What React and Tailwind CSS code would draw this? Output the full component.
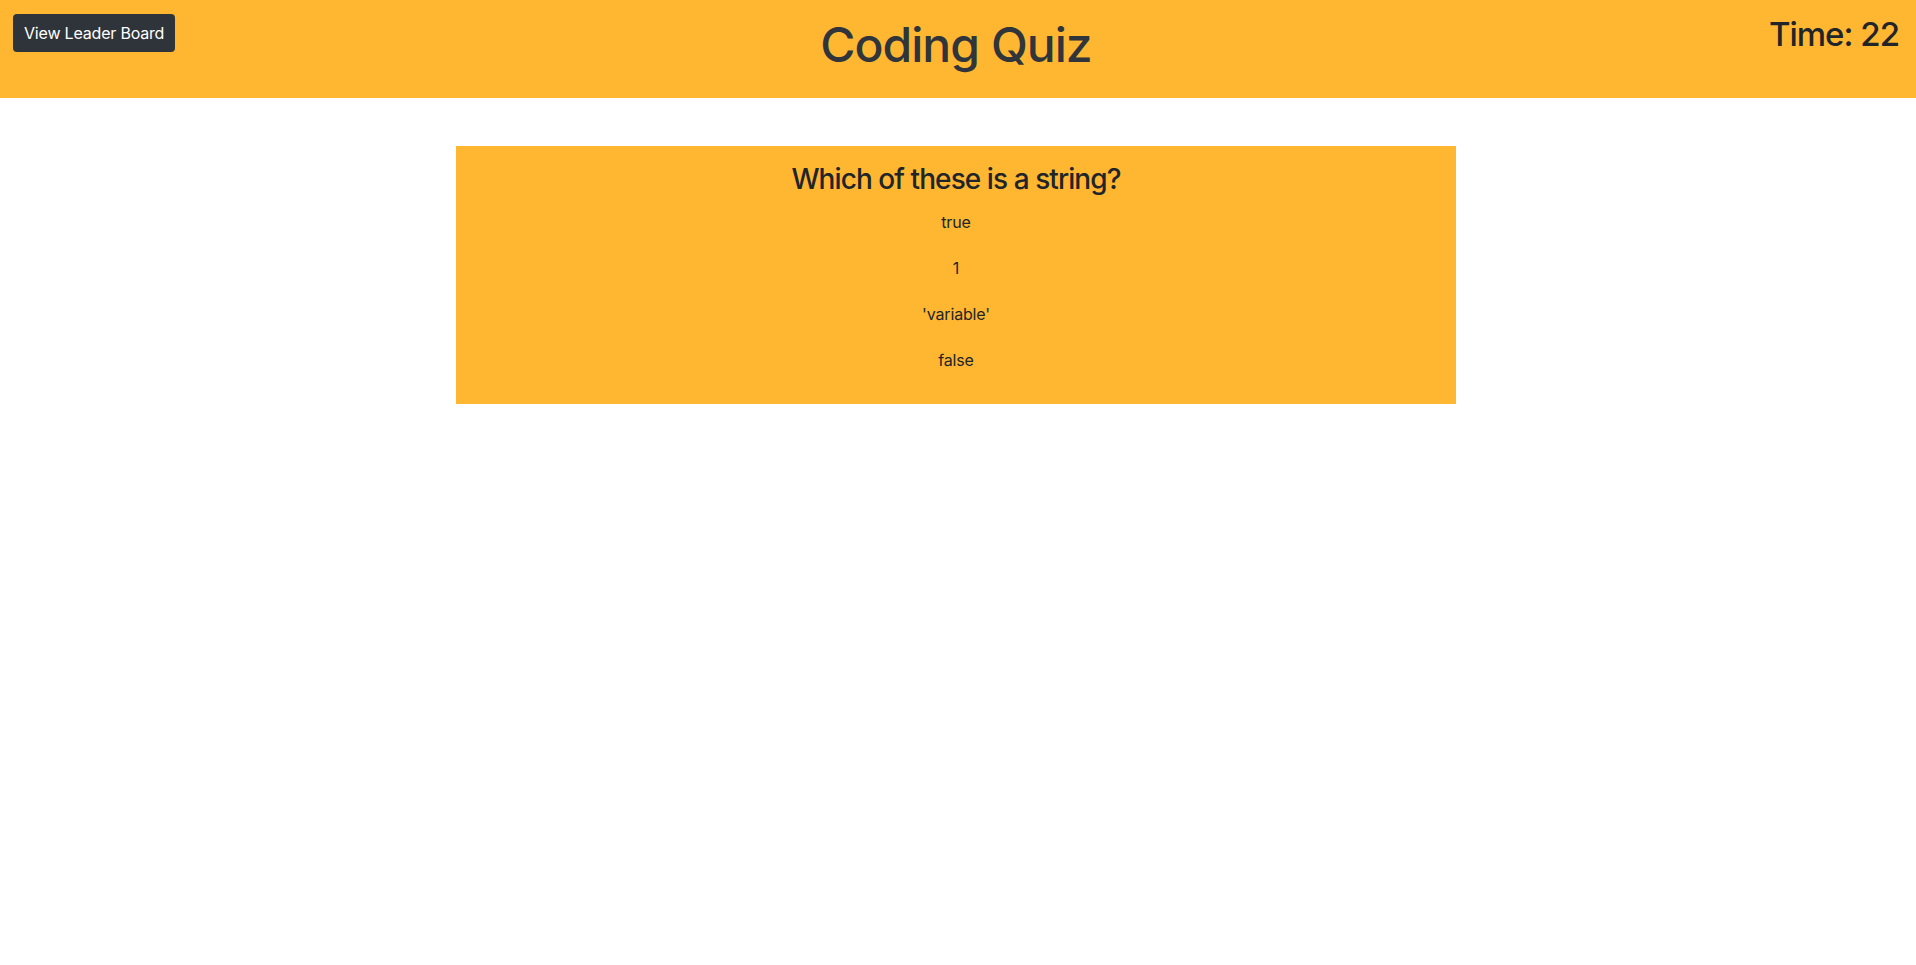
import React from "react";

export default function App() {
  const answers = ["true", "1", "'variable'", "false"];
  return (
    <div className="min-h-[965px] w-[1912px] bg-white" style={{ fontFamily: "Inter, 'Noto Sans', sans-serif" }}>
      <header className="h-[98px] bg-[#ffb732] grid grid-cols-[1fr_auto_1fr] items-start shadow-[4px_0_0_0_#ffb732]">
        <div className="pl-[13px] pt-[14px]">
          <button className="h-[38px] px-[11px] rounded-[4px] bg-[#2f343a] text-white text-[16px] leading-[24px] tracking-[-0.012em]">
            View Leader Board
          </button>
        </div>
        <h1 className="pt-[16px] text-[48px] leading-[1.2] font-medium tracking-[-0.02em] text-[#30343b] text-center">
          Coding Quiz
        </h1>
        <div className="flex justify-end pr-[13px] pt-[15px]">
          <h2 className="text-[33px] leading-[1.2] font-medium tracking-[-0.03em] text-[#212529]">Time: 22</h2>
        </div>
      </header>
      <main className="pt-[48px] flex justify-center">
        <section className="w-[1000px] bg-[#ffb732] pt-[17px] pb-[32px] flex flex-col items-center text-[#212529]">
          <h3 className="text-[28px] leading-[1.2] font-medium tracking-[-0.033em]">Which of these is a string?</h3>
          <div className="mt-[13px] flex flex-col items-center gap-[22px]">
            {answers.map((a) => (
              <p key={a} className="text-[16px] leading-[24px] tracking-[-0.01em]">{a}</p>
            ))}
          </div>
        </section>
      </main>
    </div>
  );
}
